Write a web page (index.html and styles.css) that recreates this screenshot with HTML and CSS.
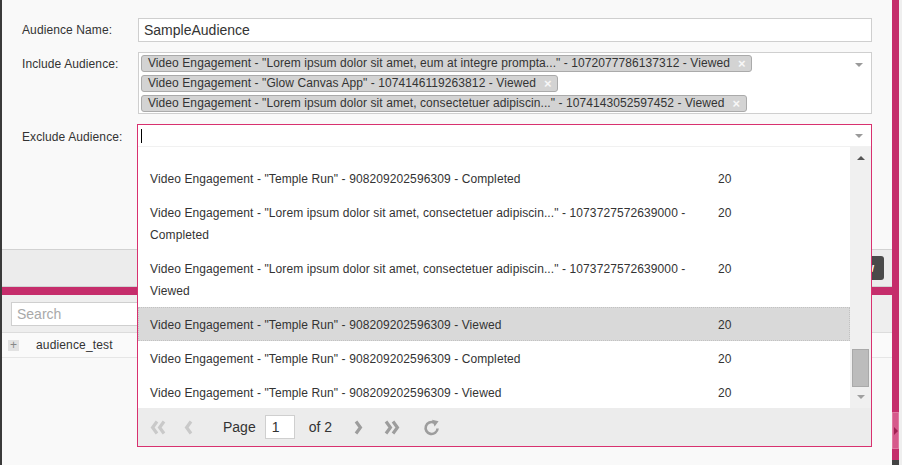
FILE: index.html
```html
<!DOCTYPE html>
<html>
<head>
<meta charset="utf-8">
<link rel="stylesheet" href="styles.css">
</head>
<body>
<div class="screen">
  <div class="strip-left"></div>
  <div class="main">
    <div class="form">
      <div class="row">
        <label class="label label-name">Audience Name:</label>
        <div class="text-input">SampleAudience</div>
      </div>
      <div class="row">
        <label class="label label-top">Include Audience:</label>
        <div class="tagbox">
          <div class="tags">
            <span class="tag">Video Engagement - "Lorem ipsum dolor sit amet, eum at integre prompta..." - 1072077786137312 - Viewed<span class="tag-x">×</span></span>
            <span class="tag">Video Engagement - "Glow Canvas App" - 1074146119263812 - Viewed<span class="tag-x">×</span></span>
            <span class="tag">Video Engagement - "Lorem ipsum dolor sit amet, consectetuer adipiscin..." - 1074143052597452 - Viewed<span class="tag-x">×</span></span>
          </div>
          <span class="caret caret-tags"></span>
        </div>
      </div>
      <div class="row">
        <label class="label label-ex">Exclude Audience:</label>
        <div class="combo">
          <div class="combo-input"><span class="cursor"></span><span class="caret caret-combo"></span></div>
          <div class="combo-body">
            <div class="list">
              <div class="item"><span class="item-name">Video Engagement - "Temple Run" - 908209202596309 - Completed</span><span class="item-val">20</span></div>
              <div class="item"><span class="item-name">Video Engagement - "Lorem ipsum dolor sit amet, consectetuer adipiscin..." - 1073727572639000 - Completed</span><span class="item-val">20</span></div>
              <div class="item"><span class="item-name">Video Engagement - "Lorem ipsum dolor sit amet, consectetuer adipiscin..." - 1073727572639000 - Viewed</span><span class="item-val">20</span></div>
              <div class="item item-hover"><span class="item-name">Video Engagement - "Temple Run" - 908209202596309 - Viewed</span><span class="item-val">20</span></div>
              <div class="item"><span class="item-name">Video Engagement - "Temple Run" - 908209202596309 - Completed</span><span class="item-val">20</span></div>
              <div class="item"><span class="item-name">Video Engagement - "Temple Run" - 908209202596309 - Viewed</span><span class="item-val">20</span></div>
            </div>
            <div class="scrollbar">
              <div class="sb-btn"><span class="sb-up"></span></div>
              <div class="sb-track"><div class="sb-thumb"></div></div>
              <div class="sb-btn sb-btn-down"><span class="sb-down"></span></div>
            </div>
          </div>
          <div class="pager">
            <svg class="pg pg-first" width="16" height="15" viewBox="0 0 16 15"><path d="M7 1.5 L2.6 7.5 L7 13.5 M14 1.5 L9.6 7.5 L14 13.5" fill="none" stroke="#c9c9c9" stroke-width="3.2"/></svg>
            <svg class="pg pg-prev" width="9" height="15" viewBox="0 0 9 15"><path d="M7 1.5 L2.6 7.5 L7 13.5" fill="none" stroke="#c9c9c9" stroke-width="3.2"/></svg>
            <span class="pg-text pg-page">Page</span>
            <span class="pg-input">1</span>
            <span class="pg-text pg-of">of 2</span>
            <svg class="pg pg-next" width="9" height="15" viewBox="0 0 9 15"><path d="M2 1.5 L6.4 7.5 L2 13.5" fill="none" stroke="#9d9d9d" stroke-width="3.2"/></svg>
            <svg class="pg pg-last" width="17" height="15" viewBox="0 0 17 15"><path d="M2 1.5 L6.4 7.5 L2 13.5 M9 1.5 L13.4 7.5 L9 13.5" fill="none" stroke="#9d9d9d" stroke-width="3.2"/></svg>
            <svg class="pg pg-refresh" width="17" height="17" viewBox="0 0 17 17"><path d="M14.6 9.5 A6 6 0 1 1 11.2 3.6" fill="none" stroke="#9d9d9d" stroke-width="2.6"/><path d="M9 0.8 L15.6 2.2 L11.6 7.6 Z" fill="#9d9d9d"/></svg>
          </div>
        </div>
      </div>
    </div>
    <div class="bgapp">
      <div class="toolbar"><span class="btn">View</span></div>
      <div class="stripe"></div>
      <div class="search-row"><div class="search-input">Search</div></div>
      <div class="tree-row"><span class="plus">+</span><span class="tree-text">audience_test</span></div>
    </div>
  </div>
  <div class="rail">
    <div class="rail-tab"><span class="rail-arrow"></span></div>
    <div class="rail-bottom"></div>
  </div>
  <div class="edge"></div>
</div>
</body>
</html>
```

FILE: styles.css
```css
html, body {
  margin: 0;
  padding: 0;
}
body {
  width: 902px;
  height: 465px;
  overflow: hidden;
  background: #f9f9f9;
  font-family: "Liberation Sans", Arial, sans-serif;
  color: #333;
}
.screen {
  display: flex;
  height: 465px;
}
.strip-left {
  width: 2px;
  background: #3a3a3a;
}
.main {
  width: 890px;
  display: flex;
  flex-direction: column;
  background: #f9f9f9;
}
.form {
  height: 249px;
  flex: none;
  box-sizing: border-box;
  padding: 18px 20px 0 20px;
}
.row {
  display: flex;
  margin-bottom: 10px;
}
.label {
  width: 116px;
  flex: none;
  font-size: 12px;
  line-height: 17px;
  letter-spacing: 0.1px;
  color: #333;
}
.label-name {
  align-self: center;
}
.label-top {
  padding-top: 4px;
}
.label-ex {
  padding-top: 5px;
}
.text-input {
  flex: 1;
  height: 24px;
  box-sizing: border-box;
  border: 1px solid #cfcfcf;
  background: #fff;
  font-size: 14px;
  line-height: 22px;
  padding-left: 5px;
  color: #333;
}
.tagbox {
  flex: 1;
  display: flex;
  border: 1px solid #cfcfcf;
  background: #fff;
  padding: 2px 2px 1px 2px;
}
.tags {
  flex: 1;
  display: flex;
  flex-direction: column;
  align-items: flex-start;
  gap: 3px;
}
.tag {
  height: 17px;
  box-sizing: border-box;
  border: 1px solid #aaa;
  border-radius: 3px;
  background: #d3d3d3;
  padding: 0 6px;
  font-size: 12px;
  line-height: 15px;
  letter-spacing: 0.08px;
  color: #333;
  white-space: nowrap;
  display: flex;
  align-items: center;
}
.tag-x {
  margin-left: 8px;
  color: #f7f7f7;
  font-size: 13px;
  font-weight: bold;
  width: 7px;
}
.caret {
  width: 0;
  height: 0;
  border-left: 4px solid transparent;
  border-right: 4px solid transparent;
  border-top: 4px solid #9a9a9a;
  flex: none;
}
.caret-tags {
  margin: 8px 6px 0 0;
}
.combo {
  position: relative;
  z-index: 5;
  flex: 1;
  margin-left: -1px;
  height: 323px;
  box-sizing: border-box;
  border: 1px solid #d8316f;
  background: #fff;
  display: flex;
  flex-direction: column;
}
.combo-input {
  height: 21px;
  flex: none;
  border-bottom: 1px solid #f1f1f1;
  display: flex;
  justify-content: space-between;
  align-items: flex-start;
}
.cursor {
  width: 1px;
  height: 14px;
  background: #000;
  margin: 4px 0 0 3px;
}
.caret-combo {
  margin: 9px 8px 0 0;
}
.combo-body {
  height: 261px;
  flex: none;
  display: flex;
}
.list {
  flex: 1;
  overflow: hidden;
  padding-top: 14px;
  box-sizing: border-box;
}
.item {
  display: grid;
  grid-template-columns: 556px auto;
  column-gap: 12px;
  padding: 7px 12px 5px 12px;
  font-size: 12px;
  line-height: 22px;
  letter-spacing: 0.1px;
  color: #333;
}
.item-hover {
  background: #d9d9d9;
  outline: 1px dotted #c2c2c2;
  outline-offset: -1px;
}
.scrollbar {
  width: 21px;
  flex: none;
  background: #f0f0f0;
  display: flex;
  flex-direction: column;
}
.sb-btn {
  height: 20px;
  display: flex;
  justify-content: center;
  padding-top: 9px;
  box-sizing: border-box;
}
.sb-btn-down {
  height: 21px;
  padding-top: 8px;
}
.sb-up {
  width: 0;
  height: 0;
  border-left: 4px solid transparent;
  border-right: 4px solid transparent;
  border-bottom: 4px solid #555;
}
.sb-down {
  width: 0;
  height: 0;
  border-left: 4px solid transparent;
  border-right: 4px solid transparent;
  border-top: 4px solid #a0a0a0;
}
.sb-track {
  flex: 1;
  display: flex;
  flex-direction: column;
  justify-content: flex-end;
}
.sb-thumb {
  height: 38px;
  width: 17px;
  margin-left: 2px;
  box-sizing: border-box;
  background: #bcbcbc;
  border: 1px solid #a9a9a9;
}
.pager {
  height: 38px;
  flex: none;
  background: #ececec;
  display: flex;
  align-items: center;
  padding-left: 12px;
}
.pg {
  flex: none;
  display: block;
}
.pg-prev {
  margin-left: 18px;
}
.pg-text {
  font-size: 14px;
  color: #333;
}
.pg-page {
  margin-left: 30px;
}
.pg-input {
  margin-left: 9px;
  width: 30px;
  height: 24px;
  box-sizing: border-box;
  border: 1px solid #cfcfcf;
  background: #fff;
  font-size: 14px;
  line-height: 22px;
  padding-left: 6px;
}
.pg-of {
  margin-left: 14px;
}
.pg-next {
  margin-left: 22px;
}
.pg-last {
  margin-left: 21px;
}
.pg-refresh {
  margin-left: 22px;
}
.bgapp {
  display: flex;
  flex-direction: column;
}
.toolbar {
  height: 38px;
  box-sizing: border-box;
  border-top: 1px solid #d2d2d2;
  border-bottom: 1px solid #d2d2d2;
  background: #ececec;
  display: flex;
  justify-content: flex-end;
  align-items: center;
  padding-right: 8px;
}
.btn {
  height: 24px;
  line-height: 24px;
  padding: 0 10px;
  background: #4a4a4a;
  border-radius: 3px;
  color: #fff;
  font-size: 12px;
  font-weight: bold;
}
.stripe {
  height: 8px;
  background: #c52d6b;
}
.search-row {
  height: 38px;
  box-sizing: border-box;
  background: #eeeeee;
  border-bottom: 1px solid #dcdcdc;
  padding: 7px 0 0 9px;
}
.search-input {
  width: 320px;
  height: 24px;
  box-sizing: border-box;
  border: 1px solid #cfcfcf;
  background: #fff;
  font-size: 14px;
  line-height: 22px;
  padding-left: 5px;
  color: #a9a9a9;
}
.tree-row {
  height: 25px;
  box-sizing: border-box;
  border-bottom: 1px solid #e6e6e6;
  background: #fafafa;
  display: flex;
  align-items: center;
  padding-left: 6px;
}
.plus {
  width: 11px;
  height: 11px;
  background: #e2e2e2;
  color: #888;
  font-size: 12px;
  line-height: 11px;
  text-align: center;
}
.tree-text {
  margin-left: 17px;
  font-size: 12px;
  letter-spacing: 0.15px;
  color: #333;
}
.rail {
  width: 7px;
  background: #c52d6b;
  display: flex;
  flex-direction: column;
}
.rail-tab {
  margin-top: 412px;
  height: 37px;
  box-sizing: border-box;
  background: #d65a8c;
  border: 1px solid #e07aa2;
  display: flex;
  align-items: center;
  padding-left: 1px;
}
.rail-arrow {
  width: 0;
  height: 0;
  border-top: 4px solid transparent;
  border-bottom: 4px solid transparent;
  border-left: 4px solid #a11f52;
}
.rail-bottom {
  margin-top: auto;
  height: 5px;
  background: #444;
}
.edge {
  width: 3px;
  background: #efefef;
}
```
